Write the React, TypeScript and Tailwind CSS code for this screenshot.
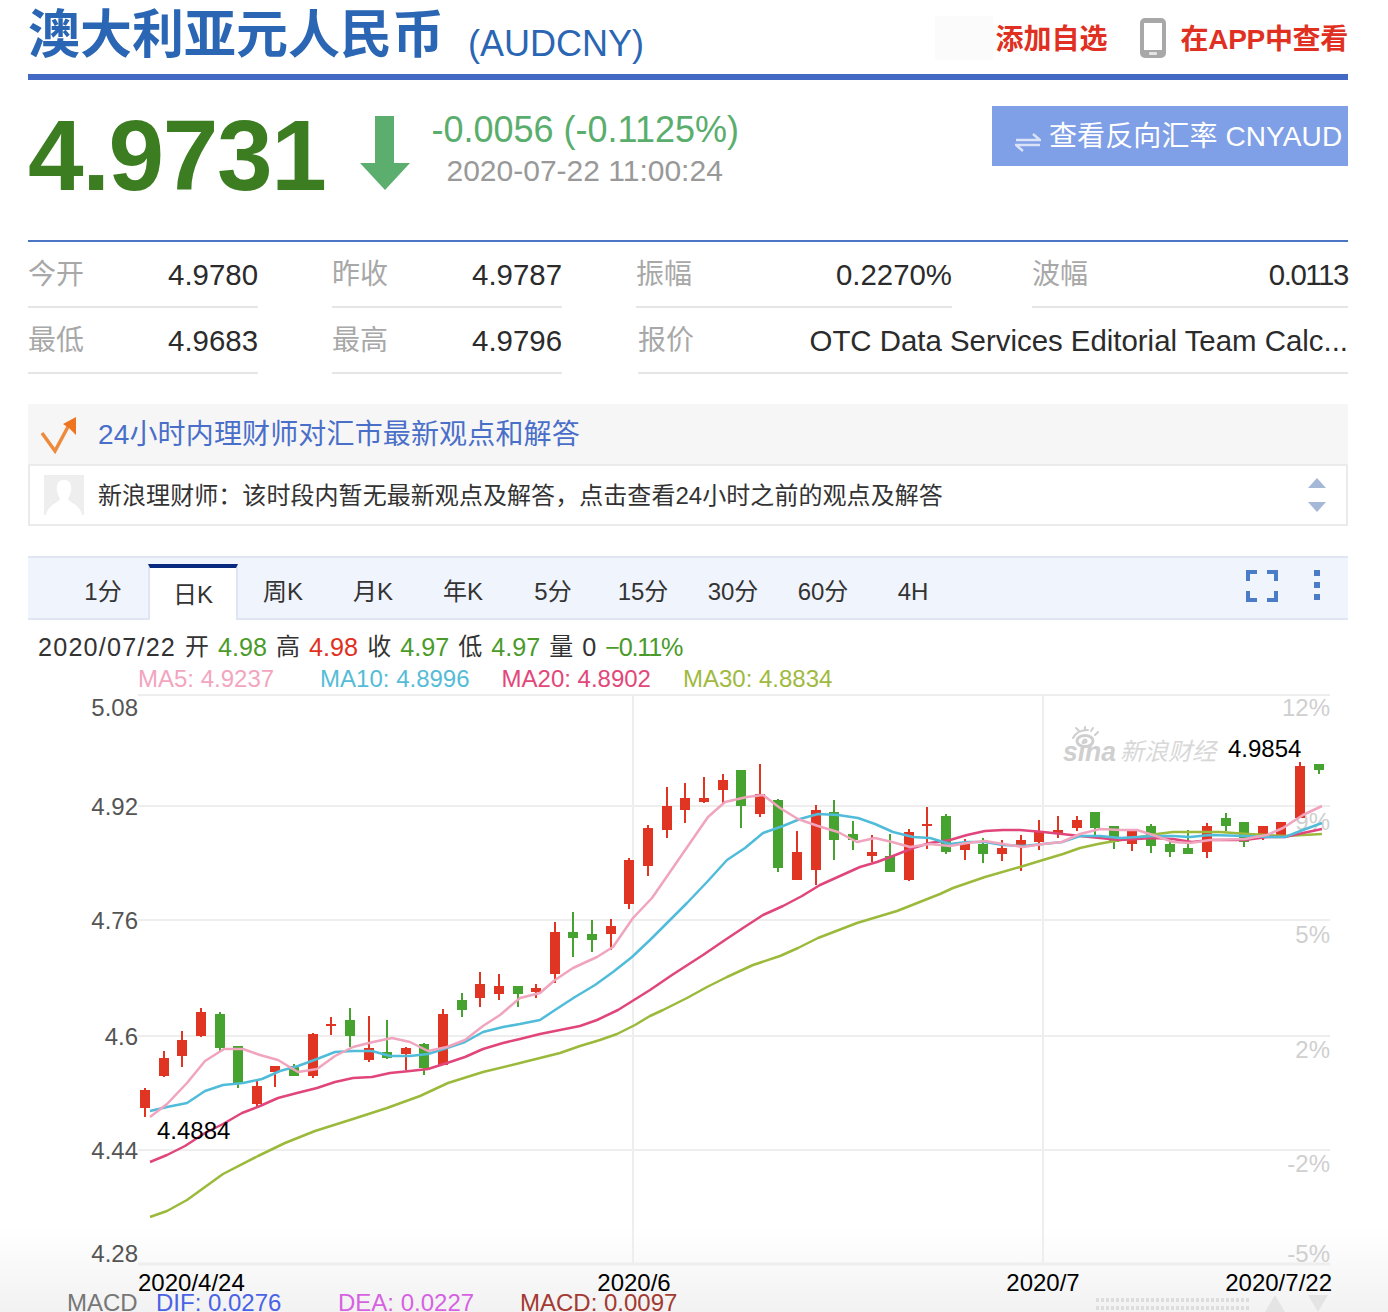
import React from 'react';

type Candle = [number, number, number, number, 'r' | 'g'];

// wick top, wick bottom, body top, body bottom, colour
const candles: Candle[] = [
  [1088, 1117, 1090, 1108, 'r'], [1051, 1077, 1058, 1076, 'r'], [1031, 1067, 1040, 1056, 'r'], [1008, 1037, 1012, 1036, 'r'],
  [1012, 1052, 1014, 1048, 'g'], [1046, 1088, 1046, 1083, 'g'], [1081, 1107, 1086, 1104, 'r'], [1066, 1087, 1066, 1072, 'r'],
  [1064, 1076, 1066, 1076, 'g'], [1033, 1078, 1034, 1076, 'r'], [1017, 1035, 1024, 1026, 'r'], [1008, 1047, 1020, 1036, 'g'],
  [1016, 1062, 1048, 1060, 'r'], [1020, 1059, 1052, 1058, 'g'], [1047, 1070, 1048, 1054, 'r'], [1043, 1075, 1044, 1068, 'g'],
  [1009, 1065, 1014, 1065, 'r'], [993, 1017, 1000, 1010, 'g'], [972, 1007, 984, 998, 'r'], [974, 1000, 986, 994, 'r'],
  [986, 1007, 986, 994, 'g'], [984, 998, 988, 992, 'r'], [922, 983, 932, 974, 'r'], [912, 957, 932, 938, 'g'],
  [920, 952, 934, 940, 'g'], [919, 950, 926, 934, 'r'], [858, 909, 860, 904, 'r'], [825, 876, 828, 866, 'r'],
  [787, 838, 806, 830, 'r'], [783, 823, 798, 810, 'r'], [777, 803, 798, 802, 'r'], [774, 803, 780, 790, 'r'],
  [770, 828, 770, 806, 'g'], [764, 817, 794, 814, 'r'], [799, 872, 800, 868, 'g'], [831, 880, 852, 880, 'r'],
  [805, 885, 810, 870, 'r'], [800, 860, 812, 840, 'g'], [821, 850, 834, 840, 'g'], [835, 862, 852, 856, 'r'],
  [834, 872, 856, 872, 'g'], [829, 881, 832, 880, 'r'], [807, 849, 824, 826, 'r'], [814, 854, 816, 852, 'g'],
  [839, 860, 844, 850, 'r'], [838, 863, 844, 854, 'g'], [840, 861, 848, 854, 'r'], [835, 871, 840, 846, 'r'],
  [820, 850, 832, 842, 'r'], [816, 838, 830, 834, 'r'], [816, 831, 820, 828, 'r'], [812, 835, 812, 828, 'g'],
  [826, 849, 826, 842, 'g'], [830, 851, 831, 844, 'r'], [824, 853, 826, 846, 'g'], [840, 857, 844, 852, 'g'],
  [830, 854, 848, 854, 'g'], [823, 858, 826, 852, 'r'], [813, 831, 818, 826, 'g'], [822, 847, 822, 842, 'g'],
  [826, 840, 826, 838, 'r'], [822, 837, 822, 836, 'r'], [762, 818, 766, 818, 'r'], [764, 774, 764, 770, 'g'],
];

const ma5 =
  '150,1117 167,1104 187,1083 205,1061 224,1049 243,1049 260,1055 278,1060 298,1072 317,1069 335,1056 353,1047 373,1042 392,1038 410,1042 428,1051 447,1047 465,1040 483,1026 500,1015 520,998 540,993 555,980 573,968 597,957 613,947 633,918 652,898 670,872 690,843 708,817 725,802 747,797 763,795 780,808 798,819 818,826 838,832 857,842 875,838 892,842 910,847 930,844 950,846 967,843 985,841 1003,844 1023,847 1043,844 1062,842 1080,834 1100,829 1120,830 1137,830 1153,835 1173,842 1190,843 1210,840 1245,839 1267,835 1283,828 1303,815 1322,806';
const ma10 =
  '150,1111 167,1107 187,1103 205,1091 223,1085 243,1083 262,1079 280,1071 298,1066 317,1059 335,1052 353,1051 372,1051 390,1056 410,1056 428,1054 447,1048 465,1042 483,1032 503,1027 520,1024 540,1020 555,1010 575,997 595,985 613,972 632,957 650,940 670,920 687,903 707,882 727,860 745,848 763,833 783,826 800,819 818,814 838,815 858,818 875,824 893,832 913,837 930,838 950,844 967,842 985,842 1003,845 1023,846 1043,844 1062,842 1080,836 1100,836 1120,838 1137,837 1153,836 1173,836 1190,837 1210,835 1245,836 1267,837 1285,837 1303,830 1322,823';
const ma20 =
  '150,1162 167,1155 185,1146 205,1133 223,1124 242,1113 260,1106 278,1098 297,1093 317,1088 335,1082 353,1078 372,1077 390,1073 410,1071 428,1069 447,1063 465,1057 483,1049 503,1043 520,1039 540,1034 560,1030 580,1026 597,1020 618,1010 650,990 672,975 703,955 725,940 743,928 763,915 783,906 802,896 820,885 840,876 860,867 877,862 893,856 913,848 930,843 950,840 967,835 985,831 1003,830 1020,830 1043,832 1062,834 1080,836 1100,838 1120,840 1137,839 1153,838 1173,839 1192,842 1210,840 1245,840 1267,837 1285,837 1303,833 1322,829';
const ma30 =
  '150,1217 167,1211 187,1200 205,1187 223,1174 258,1156 285,1143 315,1131 353,1119 387,1108 420,1096 448,1083 483,1072 520,1063 540,1058 560,1053 580,1046 600,1040 617,1034 635,1025 650,1016 663,1010 687,998 707,987 727,977 753,965 780,956 798,948 818,938 857,923 877,917 897,911 940,894 953,888 985,877 1020,867 1043,860 1063,854 1080,848 1098,844 1120,840 1140,837 1157,834 1173,832 1190,832 1220,832 1248,834 1285,836 1322,834';

const tabs = ['1分', '日K', '周K', '月K', '年K', '5分', '15分', '30分', '60分', '4H'];

const stats = [
  { label: '今开', value: '4.9780', width: 'w-[230px]' },
  { label: '昨收', value: '4.9787', width: 'w-[230px]' },
  { label: '振幅', value: '0.2270%', width: 'w-[316px]' },
  { label: '波幅', value: '0.0113', width: 'ml-[6px] w-[316px]', tight: true },
];

const stats2 = [
  { label: '最低', value: '4.9683', width: 'w-[230px]' },
  { label: '最高', value: '4.9796', width: 'w-[230px]' },
  { label: '报价', value: 'OTC Data Services Editorial Team Calc...', width: 'ml-[2px] w-[710px]' },
];

function StatCell({ label, value, width, tight }: { label: string; value: string; width: string; tight?: boolean }) {
  return (
    <div className={`flex h-[66px] items-center justify-between border-b-2 border-[#e6e6e6] pt-[2px] ${width}`}>
      <span className="text-[28px] text-[#a8a8a8]">{label}</span>
      <span className={`text-[29.4px] text-[#2b2b2b] ${tight ? 'tracking-[-1.4px]' : ''}`}>{value}</span>
    </div>
  );
}

function KlineChart() {
  const yLeft: [string, number][] = [['5.08', 716], ['4.92', 815], ['4.76', 929], ['4.6', 1045], ['4.44', 1159], ['4.28', 1262]];
  const yRight: [string, number][] = [['12%', 716], ['9%', 830], ['5%', 943], ['2%', 1058], ['-2%', 1172], ['-5%', 1262]];

  return (
    <svg width="1320" height="619" viewBox="28 693 1320 619" className="block">
      {[695, 806, 920, 1036, 1150, 1264].map((y) => (
        <line key={y} x1="138" x2="1330" y1={y} y2={y} stroke="#eeeeee" strokeWidth={y === 1264 ? 3 : 2} />
      ))}
      <line x1="633" x2="633" y1="695" y2="1264" stroke="#eeeeee" strokeWidth="2" />
      <line x1="1043" x2="1043" y1="695" y2="1264" stroke="#eeeeee" strokeWidth="2" />

      {yLeft.map(([t, y]) => (
        <text key={t} x="138" y={y} textAnchor="end" fontSize="24" fill="#555555">{t}</text>
      ))}
      {yRight.map(([t, y]) => (
        <text key={t} x="1330" y={y} textAnchor="end" fontSize="24" fill="#cfcfcf">{t}</text>
      ))}

      {/* sina watermark */}
      <g fill="none" stroke="#cfcfcf" strokeLinecap="round">
        <ellipse cx="1085" cy="741" rx="8" ry="5.5" strokeWidth="3" />
        <circle cx="1085" cy="741" r="1.5" strokeWidth="2" />
        <path d="M1073 738 C1076 732 1082 730 1088 730 M1079 731 L1076 728 M1085 730 L1085 727 M1091 731 L1093 728 M1095 735 L1098 732" strokeWidth="2" />
      </g>
      <text x="1063" y="761" fontSize="27" fontWeight="700" fontStyle="italic" fill="#cfcfcf" textLength="53" lengthAdjust="spacingAndGlyphs">sina</text>
      <text x="1120" y="760" fontSize="24" fontStyle="italic" fill="#d8d8d8">新浪财经</text>
      <text x="1228" y="757" fontSize="24" fill="#000000">4.9854</text>

      {candles.map(([wt, wb, bt, bb, c], i) => {
        const x = Math.round(145 + 18.63 * i);
        const color = c === 'r' ? '#e13524' : '#47a32f';
        return (
          <g key={i}>
            <line x1={x} x2={x} y1={wt} y2={wb} stroke={color} strokeWidth="2" />
            <rect x={x - 5} y={bt} width="10" height={Math.max(bb - bt, 2)} fill={color} />
          </g>
        );
      })}

      <polyline points={ma30} fill="none" stroke="#9bb93a" strokeWidth="2.5" strokeLinejoin="round" />
      <polyline points={ma20} fill="none" stroke="#e0457b" strokeWidth="2.5" strokeLinejoin="round" />
      <polyline points={ma10} fill="none" stroke="#50bcd9" strokeWidth="2.5" strokeLinejoin="round" />
      <polyline points={ma5} fill="none" stroke="#f0a4bd" strokeWidth="2.5" strokeLinejoin="round" />

      <text x="157" y="1139" fontSize="24" fill="#000000">4.4884</text>

      <text x="138" y="1291" fontSize="24" fill="#000000">2020/4/24</text>
      <text x="634" y="1291" textAnchor="middle" fontSize="24" fill="#000000">2020/6</text>
      <text x="1043" y="1291" textAnchor="middle" fontSize="24" fill="#000000">2020/7</text>
      <text x="1332" y="1291" textAnchor="end" fontSize="24" fill="#000000">2020/7/22</text>

      <text x="67" y="1311" fontSize="24" fill="#777777">MACD</text>
      <text x="156" y="1311" fontSize="24" fill="#4a62e6">DIF: 0.0276</text>
      <text x="338" y="1311" fontSize="24" fill="#d662e2">DEA: 0.0227</text>
      <text x="520" y="1311" fontSize="24" fill="#a33a32">MACD: 0.0097</text>

      {/* range slider */}
      <line x1="1096" x2="1250" y1="1300" y2="1300" stroke="#dddddd" strokeWidth="4" strokeDasharray="3 2" />
      <line x1="1096" x2="1250" y1="1308" y2="1308" stroke="#dddddd" strokeWidth="4" strokeDasharray="3 2" />
      <polygon points="1275,1295 1285,1312 1265,1312" fill="#e4e4e4" />
      <polygon points="1308,1295 1328,1295 1318,1312" fill="#e4e4e4" />
    </svg>
  );
}

export default function App() {
  return (
    <div className="h-[1312px] w-[1388px] overflow-hidden bg-[linear-gradient(to_bottom,#ffffff_93.5%,#f2f2f2_100%)] pl-[28px] font-['Liberation_Sans','Noto_Sans_CJK_SC',sans-serif]">
      <div className="w-[1320px]">
        {/* Title */}
        <div className="flex h-[80px] items-start border-b-[6px] border-[#426ac4]">
          <h1 className="mt-[5px] text-[52px] leading-[60px] font-bold text-[#2a66b3]">澳大利亚元人民币</h1>
          <span className="mt-[22px] ml-[24px] text-[36px] leading-[44px] text-[#2a66b3]">(AUDCNY)</span>
          <div className="ml-auto flex items-start">
            <div className="mt-[16px] h-[44px] w-[58px] bg-[#fbfbfb]" />
            <span className="mt-[18px] ml-[3px] text-[28px] leading-[44px] font-bold text-[#e03022]">添加自选</span>
            <svg width="28" height="42" viewBox="0 0 28 42" className="mt-[17px] ml-[31px]">
              <rect x="1" y="1" width="26" height="40" rx="5" fill="#a8a8a8" />
              <rect x="5" y="6" width="18" height="27" fill="#ffffff" />
              <rect x="10" y="35" width="8" height="3" rx="1" fill="#e4e4e4" />
            </svg>
            <span className="mt-[18px] ml-[14px] text-[28px] leading-[44px] font-bold tracking-[-0.3px] text-[#e03022]">在APP中查看</span>
          </div>
        </div>

        {/* Price */}
        <div className="flex h-[162px] items-start border-b-2 border-[#4a76c5]">
          <span className="mt-[20px] text-[100px] leading-[110px] font-bold tracking-[-1.4px] text-[#3c7d22]">4.9731</span>
          <svg width="50" height="74" viewBox="0 0 50 74" className="mt-[36px] ml-[35px]">
            <path d="M15 0 H34 V47 H50 L25 74 L0 47 H15 Z" fill="#5bae6d" />
          </svg>
          <div className="ml-[21px] flex flex-col">
            <span className="mt-[29px] text-[36px] leading-[42px] text-[#5aae6d]">-0.0056 (-0.1125%)</span>
            <span className="mt-[2px] ml-[15px] text-[30px] leading-[36px] text-[#999999]">2020-07-22 11:00:24</span>
          </div>
          <div className="mt-[26px] ml-auto flex h-[60px] w-[356px] items-center bg-[#7f9fe6] pt-[1px] text-[28px] text-white">
            <svg width="26" height="24" viewBox="0 0 26 24" className="mt-[10px] ml-[23px] opacity-70">
              <path d="M1 10 H25 L18 4 M25 15 H1 L8 21" fill="none" stroke="#ffffff" strokeWidth="2.5" />
            </svg>
            <span className="ml-[8px] tracking-[0.1px]">查看反向汇率 CNYAUD</span>
          </div>
        </div>

        {/* Stats */}
        <div className="flex gap-[74px]">
          {stats.map((s) => (
            <StatCell key={s.label} {...s} />
          ))}
        </div>
        <div className="flex gap-[74px]">
          {stats2.map((s) => (
            <StatCell key={s.label} {...s} />
          ))}
        </div>

        {/* Advisor */}
        <div className="mt-[30px] flex h-[60px] items-center bg-[#f6f6f6] pt-[2px]">
          <svg width="40" height="40" viewBox="0 0 40 40" className="ml-[12px]">
            <path d="M2 18 L15 36 L30 8" fill="none" stroke="#ee8a3c" strokeWidth="3.5" />
            <path d="M36 2 L36 20 L29 13 L23 9 Z" fill="#ee7420" />
          </svg>
          <span className="ml-[18px] text-[28px] tracking-[0.15px] text-[#4a6fc9]">24小时内理财师对汇市最新观点和解答</span>
        </div>
        <div className="flex h-[62px] items-center border-2 border-[#ebebeb] bg-white">
          <svg width="40" height="40" viewBox="0 0 40 40" className="ml-[14px]">
            <rect width="40" height="40" fill="#eeeeee" />
            <path d="M20 5 C26 5 28 10 27 16 C26 20 25 22 24 24 C24 27 36 29 38 40 H2 C4 29 16 27 16 24 C15 22 14 20 13 16 C12 10 14 5 20 5 Z" fill="#ffffff" />
          </svg>
          <span className="ml-[14px] pt-[1px] text-[24px] tracking-[0.06px] text-[#333333]">新浪理财师：该时段内暂无最新观点及解答，点击查看24小时之前的观点及解答</span>
          <div className="mr-[20px] ml-auto flex flex-col gap-[14px]">
            <svg width="18" height="10" viewBox="0 0 18 10"><polygon points="9,0 18,10 0,10" fill="#a6b8d8" /></svg>
            <svg width="18" height="10" viewBox="0 0 18 10"><polygon points="0,0 18,0 9,10" fill="#a6b8d8" /></svg>
          </div>
        </div>

        {/* Tabs */}
        <div className="mt-[30px] flex h-[64px] items-stretch border-y-2 border-[#dfe5f3] bg-[#f0f4fd] pl-[30px]">
          {tabs.map((t) =>
            t === '日K' ? (
              <div key={t} className="relative -mb-[2px] mt-[6px] flex w-[90px] items-center justify-center border-x-2 border-t-4 border-x-[#dfe5f3] border-t-[#0a2a80] bg-white pt-[2px] text-[24px] text-[#333333]">
                {t}
              </div>
            ) : (
              <div key={t} className="flex w-[90px] items-center justify-center pt-[8px] text-[24px] text-[#333333]">
                {t}
              </div>
            ),
          )}
          <div className="ml-auto flex items-start">
            <svg width="32" height="32" viewBox="0 0 32 32" className="mt-[12px] mr-[36px]">
              <path d="M2 11 V2 H11 M21 2 H30 V11 M30 21 V30 H21 M11 30 H2 V21" fill="none" stroke="#4a7cc8" strokeWidth="4" />
            </svg>
            <div className="mt-[12px] mr-[28px] flex flex-col gap-[6px]">
              <div className="h-[6px] w-[6px] bg-[#4a7cc8]" />
              <div className="h-[6px] w-[6px] bg-[#4a7cc8]" />
              <div className="h-[6px] w-[6px] bg-[#4a7cc8]" />
            </div>
          </div>
        </div>

        {/* OHLC */}
        <div className="mt-[12px] ml-[10px] flex h-[30px] items-center gap-[9px] text-[25.2px] leading-[30px] text-[#333333]">
          <span className="tracking-[1.2px]">2020/07/22</span>
          <span className="text-[24px]">开</span>
          <span className="text-[#4a9b2a]">4.98</span>
          <span className="text-[24px]">高</span>
          <span className="text-[#e0301e]">4.98</span>
          <span className="text-[24px]">收</span>
          <span className="text-[#4a9b2a]">4.97</span>
          <span className="text-[24px]">低</span>
          <span className="text-[#4a9b2a]">4.97</span>
          <span className="text-[24px]">量</span>
          <span>0</span>
          <span className="tracking-[-1.2px] text-[#4a9b2a]">−0.11%</span>
        </div>
        <div className="mt-[2px] ml-[110px] flex h-[29px] items-center text-[24px] leading-[29px]">
          <span className="text-[#f3a5c0]">MA5: 4.9237</span>
          <span className="ml-[46px] text-[#55bcd8]">MA10: 4.8996</span>
          <span className="ml-[32px] text-[#e2477a]">MA20: 4.8902</span>
          <span className="ml-[32px] text-[#9fba3f]">MA30: 4.8834</span>
        </div>

        <KlineChart />
      </div>
    </div>
  );
}
